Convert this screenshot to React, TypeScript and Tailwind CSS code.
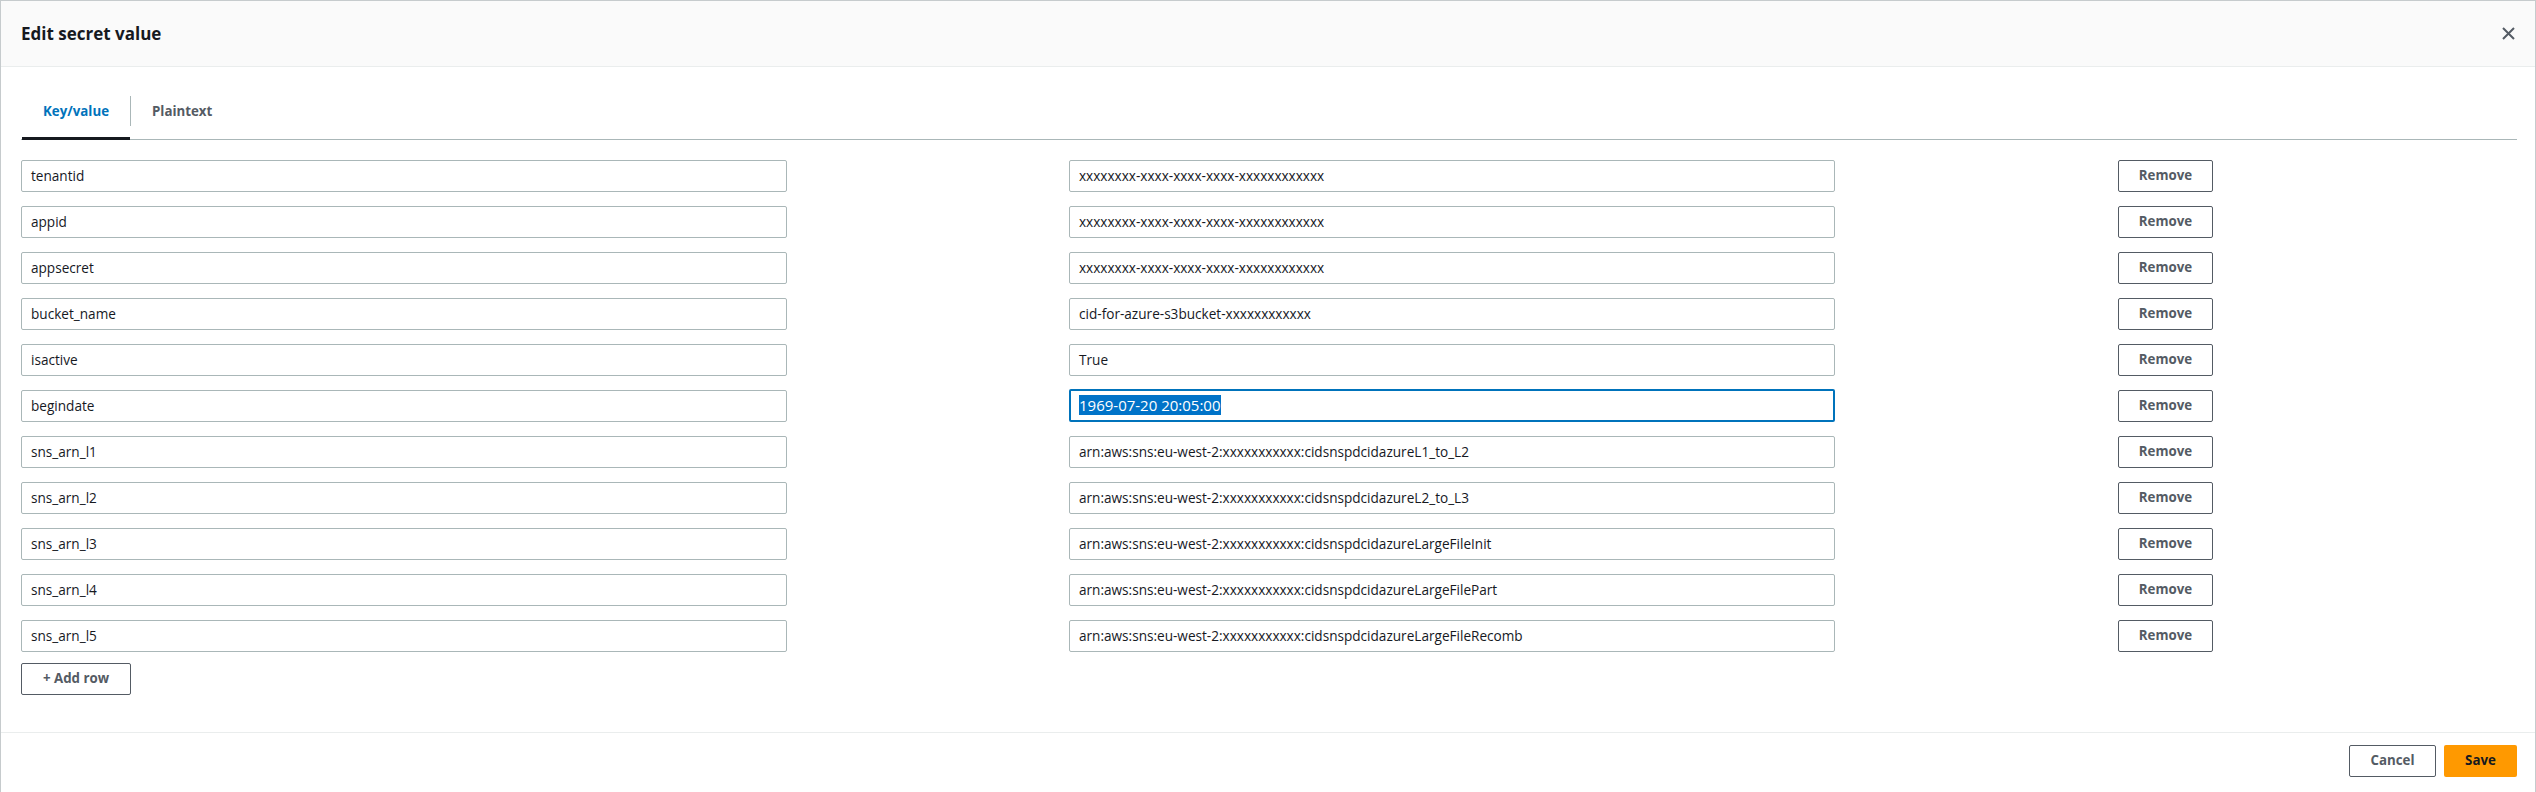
import React from "react";

const rows = [
  { key: "tenantid", value: "xxxxxxxx-xxxx-xxxx-xxxx-xxxxxxxxxxxx" },
  { key: "appid", value: "xxxxxxxx-xxxx-xxxx-xxxx-xxxxxxxxxxxx" },
  { key: "appsecret", value: "xxxxxxxx-xxxx-xxxx-xxxx-xxxxxxxxxxxx" },
  { key: "bucket_name", value: "cid-for-azure-s3bucket-xxxxxxxxxxxx" },
  { key: "isactive", value: "True" },
  { key: "begindate", value: "1969-07-20 20:05:00", focused: true },
  { key: "sns_arn_l1", value: "arn:aws:sns:eu-west-2:xxxxxxxxxxx:cidsnspdcidazureL1_to_L2" },
  { key: "sns_arn_l2", value: "arn:aws:sns:eu-west-2:xxxxxxxxxxx:cidsnspdcidazureL2_to_L3" },
  { key: "sns_arn_l3", value: "arn:aws:sns:eu-west-2:xxxxxxxxxxx:cidsnspdcidazureLargeFileInit" },
  { key: "sns_arn_l4", value: "arn:aws:sns:eu-west-2:xxxxxxxxxxx:cidsnspdcidazureLargeFilePart" },
  { key: "sns_arn_l5", value: "arn:aws:sns:eu-west-2:xxxxxxxxxxx:cidsnspdcidazureLargeFileRecomb" },
];

const inputClass =
  "w-[766px] h-[32px] px-[9px] border border-[#aab7b8] rounded-[2px] bg-white text-[13.6px] text-[#16191f] flex items-center";

const buttonClass =
  "h-[32px] border border-[#545b64] rounded-[2px] bg-white text-[13.3px] font-bold text-[#545b64] flex items-center justify-center";

const App = () => {
  return (
    <div
      className="w-[2536px] h-[792px] flex flex-col bg-white border-x border-t border-[#c6cbcd] overflow-hidden"
      style={{ fontFamily: '"Open Sans", "Liberation Sans", sans-serif' }}
    >
      {/* Header */}
      <div className="h-[66px] shrink-0 flex items-center justify-between px-[20px] bg-[#fafafa] border-b border-[#eaeded]">
        <h1 className="text-[17px] font-bold text-[#16191f]">Edit secret value</h1>
        <svg width="13" height="13" viewBox="0 0 13 13" className="text-[#545b64]">
          <path d="M1 1L12 12M12 1L1 12" stroke="currentColor" strokeWidth="2" fill="none" />
        </svg>
      </div>

      {/* Body */}
      <div className="flex-1 px-[20px]">
        {/* Tabs */}
        <div className="mt-[16px] mr-[-2px] flex items-center h-[57px] border-b border-[#aab7b8]">
          <div className="relative h-[56px] flex items-center px-[21px] ml-px pt-[2px]">
            <span className="text-[13.3px] font-bold text-[#0073bb]">Key/value</span>
            <span className="absolute left-0 right-0 bottom-[-1px] h-[3px] bg-[#16191f]" />
          </div>
          <span className="w-px h-[30px] bg-[#aab7b8]" />
          <div className="h-[56px] flex items-center px-[21px] pt-[2px]">
            <span className="text-[13.3px] font-bold text-[#545b64]">Plaintext</span>
          </div>
        </div>

        {/* Key/value rows */}
        <div className="mt-[20px] flex flex-col gap-[14px]">
          {rows.map((row) => (
            <div key={row.key} className="grid grid-cols-[1048px_1049px_1fr] items-center">
              <div className={inputClass}>{row.key}</div>
              {row.focused ? (
                <div className="w-[766px] h-[33px] -mt-[2px] px-[8px] border-2 border-[#0073bb] rounded-[2px] bg-white text-[15px] flex items-center">
                  <span className="bg-[#0073c8] text-white leading-[20px]">{row.value}</span>
                </div>
              ) : (
                <div className={inputClass}>{row.value}</div>
              )}
              <button className={`${buttonClass} w-[95px]`}>Remove</button>
            </div>
          ))}
        </div>

        <button className={`${buttonClass} mt-[11px] w-[110px]`}>+ Add row</button>
      </div>

      {/* Footer */}
      <div className="h-[60px] shrink-0 border-t border-[#eaeded] pt-[12px] pr-[18px] flex justify-end items-start gap-[8px]">
        <button className={`${buttonClass} w-[87px]`}>Cancel</button>
        <button className="w-[73px] h-[32px] rounded-[2px] bg-[#ff9900] text-[13.3px] font-bold text-[#16191f] flex items-center justify-center">
          Save
        </button>
      </div>
    </div>
  );
};

export default App;
